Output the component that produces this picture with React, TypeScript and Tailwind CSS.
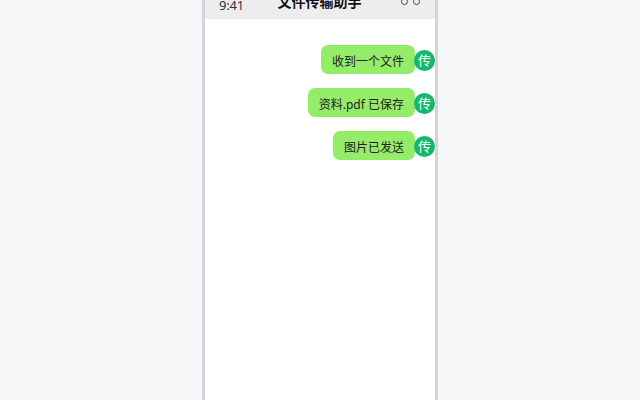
export default function App() {
  const msgs = ["收到一个文件", "资料.pdf 已保存", "图片已发送"];
  return (
    <div className="h-[400px] overflow-hidden bg-[#f4f6f8] flex justify-center" style={{ fontFamily: '"Noto Sans", "Noto Sans CJK SC", sans-serif' }}>
      <div className="w-[236px] h-[500px] -mt-[24px] bg-white border-x-[3px] border-[#d1d5d8] flex flex-col">
        <div className="h-[43px] shrink-0 bg-[#ededed] flex items-end justify-between pl-[14px] pr-[15px] pb-[4px]">
          <span className="text-[13px] leading-[20px] text-[#333] w-[40px] tracking-[-0.2px]">9:41</span>
          <span className="text-[14px] leading-[22px] font-bold text-[#111] mb-[3px]" style={{ fontFamily: '"Noto Sans CJK SC", sans-serif' }}>文件传输助手</span>
          <span className="w-[40px] flex justify-end gap-[5px] mb-[10px]">
            <span className="w-[7px] h-[7px] rounded-full border border-[#444]" />
            <span className="w-[7px] h-[7px] rounded-full border border-[#444]" />
          </span>
        </div>
        <div className="flex flex-col gap-[14px] pt-[26px] items-end">
          {msgs.map((m) => (
            <div key={m} className="flex items-start">
              <div className="h-[29px] rounded-[7px] bg-[#95ec69] px-[11px] pt-[4px] flex items-center text-[12px] text-[#222]">{m}</div>
              <div className="w-[21px] h-[21px] -ml-[1px] mt-[5px] rounded-full bg-[#14b86a] text-white text-[13px] flex items-center justify-center">传</div>
            </div>
          ))}
        </div>
      </div>
    </div>
  );
}
